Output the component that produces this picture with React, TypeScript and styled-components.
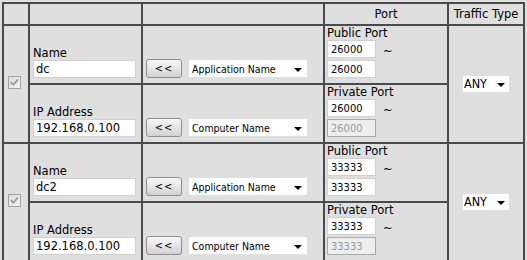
import React from "react";
import styled, { createGlobalStyle } from "styled-components";

const GlobalStyle = createGlobalStyle`
  html, body { margin: 0; padding: 0; background: #dfdfdf; }
  body { font-family: "DejaVu Sans", Verdana, sans-serif; font-size: 11.5px; color: #000; }
`;

const Grid = styled.div`
  display: grid;
  grid-template-columns: 26px 113px 182px 124px 78px;
  grid-template-rows: 22px 59px 59px 59px 59px;
  margin: 2px 0 0 2px;
  width: max-content;
`;

const Cell = styled.div<{ $last?: boolean; $span?: number }>`
  box-sizing: border-box;
  border-top: 2px solid #4a4a4a;
  border-left: 2px solid #4a4a4a;
  border-right: ${(p) => (p.$last ? "2px solid #4a4a4a" : "none")};
  grid-row: ${(p) => (p.$span ? `span ${p.$span}` : "auto")};
  min-width: 0;
`;

const HeadCell = styled(Cell)`
  display: flex;
  align-items: center;
  justify-content: center;
  font-size: 11.5px;
  line-height: 13px;
  padding-top: 1px;
`;

const CheckCell = styled(Cell)`
  display: flex;
  align-items: center;
  padding-left: 4px;
  padding-bottom: 3px;
`;

const FieldCell = styled(Cell)`
  display: flex;
  flex-direction: column;
  justify-content: flex-end;
  padding: 0 0 5px 3px;
`;

const ActionCell = styled(Cell)`
  display: flex;
  align-items: flex-end;
  padding: 0 0 5px 3px;
`;

const ActionRow = styled.div`
  display: flex;
  align-items: center;
  gap: 7px;
  height: 19px;
`;

const PortCell = styled(Cell)`
  display: flex;
  flex-direction: column;
  padding: 1px 0 0 2px;
`;

const TrafficCell = styled(Cell)`
  display: flex;
  align-items: center;
  justify-content: center;
  padding-bottom: 1px;
`;

const Label = styled.div`
  font-size: 11.5px;
  line-height: 13px;
  white-space: nowrap;
`;

const TextInput = styled.input<{ $w: number; $cond?: boolean }>`
  box-sizing: border-box;
  width: ${(p) => p.$w}px;
  height: 18px;
  margin: 0;
  padding: 0 0 0 ${(p) => (p.$cond ? 3 : 2)}px;
  border: 1px solid #d0d0d0;
  background: #fff;
  font-family: ${(p) =>
    p.$cond ? '"DejaVu Sans Condensed", "DejaVu Sans", sans-serif' : '"DejaVu Sans", sans-serif'};
  font-stretch: ${(p) => (p.$cond ? "condensed" : "normal")};
  font-size: ${(p) => (p.$cond ? 11 : 11.5)}px;
  color: #000;
  outline: none;
  &:disabled {
    background: #eeeeee;
    border-color: #a9a9a9;
    color: #999;
  }
`;

const PortRow = styled.div`
  display: flex;
  align-items: flex-start;
  gap: 7px;
  margin-bottom: 2px;
`;

const Tilde = styled.span`
  font-size: 11.5px;
  line-height: 13px;
  padding-top: 5px;
`;

const Button = styled.button`
  box-sizing: border-box;
  width: 36px;
  height: 19px;
  margin: 0;
  padding: 0 0 1px;
  border: 1px solid #8e8e8e;
  border-radius: 3px;
  background: linear-gradient(#f6f6f6, #e4e4e4 55%, #d2d2d2);
  font-family: "DejaVu Sans Condensed", "DejaVu Sans", sans-serif;
  font-stretch: condensed;
  font-size: 11px;
  letter-spacing: 1px;
  color: #000;
`;

const SelectWrap = styled.span`
  position: relative;
  display: inline-block;
`;

const Select = styled.select<{ $w: number; $h: number; $fs: number; $pl: number }>`
  appearance: none;
  -webkit-appearance: none;
  box-sizing: border-box;
  display: block;
  width: ${(p) => p.$w}px;
  height: ${(p) => p.$h}px;
  margin: 0;
  padding: 0 0 0 ${(p) => p.$pl}px;
  border: none;
  border-radius: 0;
  background: #fff;
  font-family: "DejaVu Sans Condensed", "DejaVu Sans", sans-serif;
  font-stretch: condensed;
  font-size: ${(p) => p.$fs}px;
  color: #000;
  outline: none;
`;

const Caret = styled.span<{ $r: number }>`
  position: absolute;
  right: ${(p) => p.$r}px;
  top: 50%;
  margin-top: -1px;
  width: 0;
  height: 0;
  border-left: 4px solid transparent;
  border-right: 4px solid transparent;
  border-top: 4px solid #000;
  pointer-events: none;
`;

const CheckBox = styled.span`
  box-sizing: border-box;
  display: inline-flex;
  align-items: center;
  justify-content: center;
  width: 13px;
  height: 13px;
  border: 1px solid #a3a3a3;
  background: linear-gradient(135deg, #dcdcdc, #f2f2f2);
`;

const Check = () => (
  <CheckBox>
    <svg width="9" height="9" viewBox="0 0 9 9">
      <path d="M1 4.2 L3.4 6.8 L8 1.4" fill="none" stroke="#9a9a9a" strokeWidth="1.7" />
    </svg>
  </CheckBox>
);

type Rule = { name: string; pub: string; ip: string };
const rules: Rule[] = [
  { name: "dc", pub: "26000", ip: "192.168.0.100" },
  { name: "dc2", pub: "33333", ip: "192.168.0.100" },
];

const Dropdown = ({ value, w }: { value: string; w: number }) => (
  <SelectWrap>
    <Select $w={w} $h={17} $fs={10.5} $pl={3} defaultValue={value}>
      <option>{value}</option>
    </Select>
    <Caret $r={5} />
  </SelectWrap>
);

const RuleRows = ({ r }: { r: Rule }) => (
  <>
    <CheckCell $span={2}>
      <Check />
    </CheckCell>
    <FieldCell>
      <Label>Name</Label>
      <TextInput $w={103} defaultValue={r.name} />
    </FieldCell>
    <ActionCell>
      <ActionRow>
        <Button>&lt;&lt;</Button>
        <Dropdown value="Application Name" w={118} />
      </ActionRow>
    </ActionCell>
    <PortCell>
      <Label>Public Port</Label>
      <PortRow>
        <TextInput $w={49} $cond defaultValue={r.pub} />
        <Tilde>~</Tilde>
      </PortRow>
      <TextInput $w={49} $cond defaultValue={r.pub} />
    </PortCell>
    <TrafficCell $span={2} $last>
      <SelectWrap>
        <Select $w={46} $h={16} $fs={12.5} $pl={1} defaultValue="ANY">
          <option>ANY</option>
        </Select>
        <Caret $r={4} />
      </SelectWrap>
    </TrafficCell>
    <FieldCell>
      <Label>IP Address</Label>
      <TextInput $w={103} defaultValue={r.ip} />
    </FieldCell>
    <ActionCell>
      <ActionRow>
        <Button>&lt;&lt;</Button>
        <Dropdown value="Computer Name" w={118} />
      </ActionRow>
    </ActionCell>
    <PortCell>
      <Label>Private Port</Label>
      <PortRow>
        <TextInput $w={49} $cond defaultValue={r.pub} />
        <Tilde>~</Tilde>
      </PortRow>
      <TextInput $w={49} $cond disabled defaultValue={r.pub} />
    </PortCell>
  </>
);

export default function App() {
  return (
    <>
      <GlobalStyle />
      <Grid>
        <HeadCell />
        <HeadCell />
        <HeadCell />
        <HeadCell>Port</HeadCell>
        <HeadCell $last>Traffic Type</HeadCell>
        {rules.map((r) => (
          <RuleRows key={r.name} r={r} />
        ))}
      </Grid>
    </>
  );
}
